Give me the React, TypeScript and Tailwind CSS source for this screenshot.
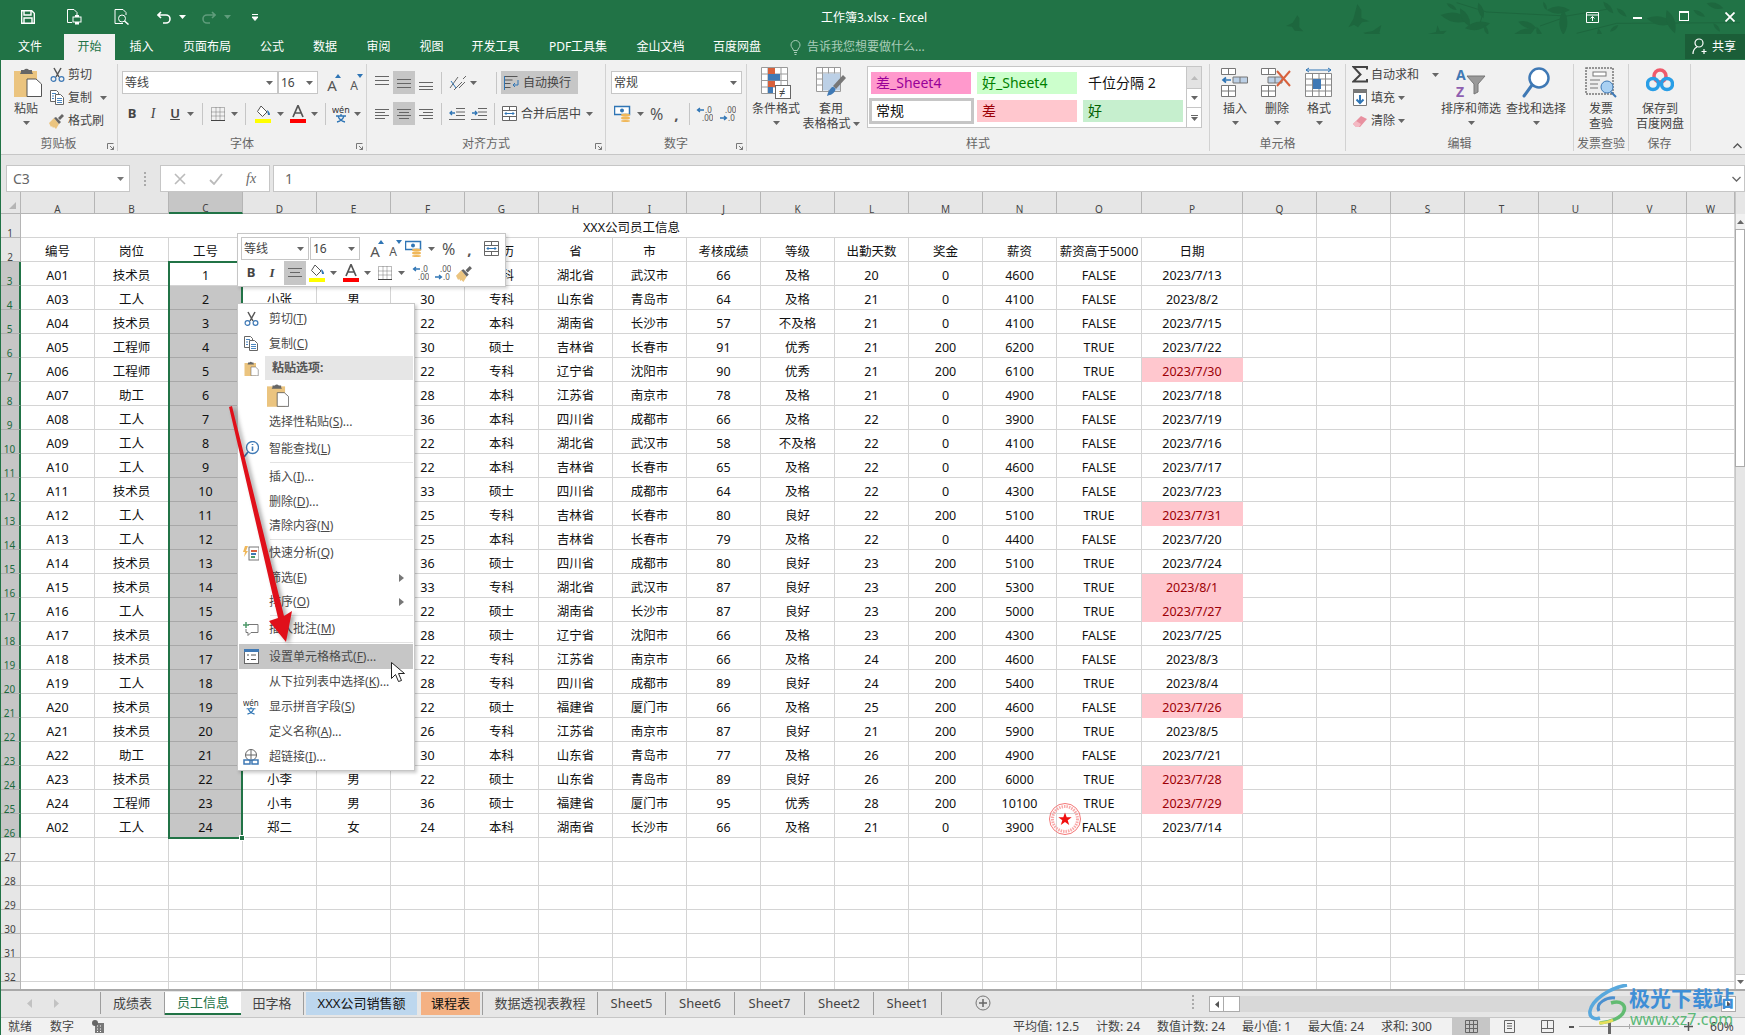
import React from "react";

const Caret = ({ c = "#666", cls = "" }: { c?: string; cls?: string }) => (
  <svg width="7" height="4" viewBox="0 0 7 4" className={"shrink-0 " + cls}><path d="M0 0h7L3.5 4z" fill={c} /></svg>
);
const Launcher = () => (
  <svg width="7" height="7" viewBox="0 0 7 7" className="absolute right-[3px] bottom-[1px]"><path d="M0.5 6V0.5H6.5M3 3l3.5 3.5M6.5 3.5v3h-3" fill="none" stroke="#777" strokeWidth="1" /></svg>
);

const Clipboard = ({ w = 28, h = 30 }: { w?: number; h?: number }) => (
  <svg width={w} height={h} viewBox="0 0 28 30" className="shrink-0">
    <rect x="0" y="4" width="23" height="26" fill="#ebc47f" />
    <path d="M7 5V3h3a3 3 0 0 1 5 0h3v2l1 2H6z" fill="#666" />
    <path d="M13 12h9l5.500 5v12.500H13z" fill="#fff" stroke="#555" strokeWidth="1" />
  </svg>
);
const Scissors = ({ s = 15 }: { s?: number }) => (
  <svg width={s} height={s} viewBox="0 0 15 15" className="shrink-0">
    <path d="M4 1l5 9M11 1L6 10" stroke="#555" strokeWidth="1.500" fill="none" />
    <circle cx="3.500" cy="12" r="2.400" fill="none" stroke="#3f79b5" strokeWidth="1.200" />
    <circle cx="11.500" cy="12" r="2.400" fill="none" stroke="#3f79b5" strokeWidth="1.200" />
  </svg>
);
const Copy = ({ s = 15 }: { s?: number }) => (
  <svg width={s} height={s} viewBox="0 0 15 15" className="shrink-0">
    <path d="M.5.500h6l2 2v9h-8z" fill="#fff" stroke="#666" />
    <path d="M5.500 4.500h5l3 3v7h-8z" fill="#fff" stroke="#666" />
    <path d="M2 3.500h4M2 6h2M2 8.500h2M7 8.500h5M7 10.500h5M7 12.500h5" stroke="#4a86c0" />
  </svg>
);
const Brush = ({ s = 16 }: { s?: number }) => (
  <svg width={s} height={s} viewBox="0 0 16 16" className="shrink-0">
    <path d="M0 10l5-5 5 6-3 5-2-2-1 1-1-2-1 1z" fill="#ebc47f" />
    <path d="M5 5l5 6 2-2-5-5zM9 5l4-4 2 2-4 4z" fill="#666" />
  </svg>
);
const Lines = ({ ys, x = [[0, 14]], c = "#666" }: { ys: number[]; x?: number[][]; c?: string }) => (
  <svg width="14" height="14" viewBox="0 0 14 14" className="shrink-0">
    {ys.map((y, i) => { const r = x[i % x.length]; return <path key={i} d={`M${r[0]} ${y + 0.5}H${r[1]}`} stroke={c} />; })}
  </svg>
);
const Currency = () => (
  <svg width="17" height="17" viewBox="0 0 17 17" className="shrink-0">
    <rect x="0.500" y="1.500" width="15" height="8" fill="#fff" stroke="#2f75b5" strokeWidth="1.500" />
    <circle cx="8" cy="5.500" r="2" fill="#2f75b5" />
    <ellipse cx="11.500" cy="10" rx="4.500" ry="1.500" fill="#f0b85a" />
    <ellipse cx="11.500" cy="13" rx="4.500" ry="1.500" fill="#f0b85a" />
    <ellipse cx="11.500" cy="16" rx="4.500" ry="1" fill="#f0b85a" />
  </svg>
);
const Dec = ({ inc }: { inc?: boolean }) => (
  <svg width="17" height="16" viewBox="0 0 17 16" className="shrink-0">
    <path d={inc ? "M1 12h6M5 10l2.500 2L5 14" : "M8 4H2M4 2L1.500 4 4 6"} stroke="#2f75b5" strokeWidth="1.300" fill="none" />
    <text x={inc ? 6 : 9} y="7" fontSize="8" fill="#555">{inc ? ".00" : ".0"}</text>
    <text x={inc ? 9 : 6} y="15" fontSize="8" fill="#555">{inc ? ".0" : ".00"}</text>
  </svg>
);
const BorderIc = () => (
  <svg width="14" height="14" viewBox="0 0 14 14" className="shrink-0">
    <path d="M.5.500h13v13H.5zM.5 5h13M.5 9h13M5 .5v13M9 .5v13" fill="none" stroke="#777" strokeDasharray="1 1" />
    <path d="M0 13.500h14" stroke="#444" />
  </svg>
);
const FillIc = () => (
  <svg width="17" height="18" viewBox="0 0 17 18" className="shrink-0">
    <path d="M6 1l6 6-4.500 4.500-5-5z" fill="#fff" stroke="#555" />
    <path d="M12 5c2 1 3 3 3 5h-2z" fill="#2f75b5" />
    <rect x="0" y="14" width="16" height="4" fill="#ffff00" />
  </svg>
);
const ColorA = () => (
  <svg width="16" height="18" viewBox="0 0 16 18" className="shrink-0">
    <path d="M3 12L8 0.500 13 12M5 8h6" fill="none" stroke="#555" strokeWidth="1.700" />
    <rect x="0" y="14" width="16" height="4" fill="#ff0000" />
  </svg>
);
const Wen = ({ s = 18 }: { s?: number }) => (
  <svg width={s} height={s} viewBox="0 0 18 18" className="shrink-0">
    <text x="0" y="8" fontSize="9" fill="#333">wén</text>
    <path d="M9 9v2M4 11h10M6 11c1 3 3 5 7 6M12 11c-1 3-3 5-7 6" stroke="#2f75b5" fill="none" strokeWidth="1.300" />
  </svg>
);
const MergeIc = ({ s = 15 }: { s?: number }) => (
  <svg width={s} height={s} viewBox="0 0 15 15" className="shrink-0">
    <path d="M.5.500h14v14H.5zM.5 4.500h14M.5 10.500h14M7.500.5v4M7.500 10.500v4" fill="#fff" stroke="#666" />
    <path d="M3 7.500h9M4.500 6L3 7.500 4.500 9M10.500 6L12 7.500 10.500 9" fill="none" stroke="#2f75b5" />
  </svg>
);
const GrowA = ({ up }: { up?: boolean }) => (
  <span className="relative flex items-end justify-center w-[18px] h-[20px] text-[#555]">
    <span className={up ? "text-[15px] leading-[16px]" : "text-[12px] leading-[14px]"}>A</span>
    <svg width="6" height="4" viewBox="0 0 6 4" className="absolute top-[1px] right-0"><path d={up ? "M0 4h6L3 0z" : "M0 0h6L3 4z"} fill="#2f75b5" /></svg>
  </span>
);
const Sep = ({ cls = "h-[22px]", ml = "mx-[4px]" }: { cls?: string; ml?: string }) => <span className={"w-px bg-[#c6c6c6] shrink-0 " + cls + " " + ml} />;

const Big = ({ icon, lines, caret, w = "w-[50px]" }: { icon: React.ReactNode; lines: React.ReactNode[]; caret?: boolean; w?: string }) => (
  <div className={"flex flex-col items-center shrink-0 text-[12px] leading-[15px] text-[#444] " + w}>
    <div className="h-[37px] pt-[3px] flex items-start justify-center">{icon}</div>
    {lines.map((l, i) => <div key={i} className="whitespace-nowrap flex items-center">{l}</div>)}
    {caret && <div className="h-[13px] flex items-center"><Caret /></div>}
  </div>
);
const Group = ({ w, label, children, launcher }: { w: string; label: string; children: React.ReactNode; launcher?: boolean }) => (
  <div className={"relative flex flex-col h-[87px] mt-[4px] border-r border-[#d2d2d2] shrink-0 " + w}>
    <div className="flex h-[72px]">{children}</div>
    <div className="h-[15px] flex items-center justify-center text-[12px] leading-[15px] text-[#666]">{label}</div>
    {launcher && <Launcher />}
  </div>
);
const Box = ({ w, text }: { w: string; text: string }) => (
  <div className={"h-[23px] bg-white border border-[#c6c6c6] flex items-center justify-between pl-[2px] pr-[4px] text-[12px] text-[#444] shrink-0 " + w}>
    <span>{text}</span><Caret />
  </div>
);

const SmallRow = ({ icon, text, caret, capMl = "ml-[8px]" }: { icon: React.ReactNode; text: string; caret?: boolean; capMl?: string }) => (
  <div className="h-[23px] flex items-center text-[12px] text-[#444] whitespace-nowrap">
    <span className="w-[18px] flex justify-center mr-[2px]">{icon}</span><span>{text}</span>{caret && <Caret cls={capMl} />}
  </div>
);

function CondFormatIc() {
  return (
    <svg width="30" height="32" viewBox="0 0 30 32">
      <path d="M.5.500h26v26H.5zM7 .5v26M20 .5v26M.5 7h26M.5 13.500h26M.5 20h26" fill="#fff" stroke="#9a9a9a" />
      <rect x="7" y="1" width="7" height="6" fill="#d8613c" /><rect x="7" y="7" width="12" height="6.500" fill="#3f79b5" /><rect x="7" y="14" width="7" height="6" fill="#d8613c" /><rect x="7" y="20" width="5" height="6" fill="#3f79b5" />
      <rect x="14.500" y="18.500" width="15" height="13" fill="#fff" stroke="#666" />
      <text x="18" y="29" fontSize="11" fill="#444">≠</text>
    </svg>
  );
}
function TableFormatIc() {
  return (
    <svg width="30" height="32" viewBox="0 0 30 32">
      <path d="M.5.500h24v24H.5zM.5 6h24M.5 12h24M.5 18h24M6.500.5v24M12.500.5v24M18.500.5v24" fill="#fff" stroke="#9a9a9a" />
      <rect x="7" y="6.500" width="17" height="17" fill="#bcd0e6" />
      <path d="M27 8l3 3-10 11-3-3z" fill="#777" />
      <path d="M16 20c3 0 4 2 3 4-2 4-6 4-8 5 1-3 1-5 5-9z" fill="#3f79b5" />
    </svg>
  );
}
const InsertIc = () => (
  <svg width="28" height="30" viewBox="0 0 28 30">
    <path d="M.5 1.500h14v6H.5zM7.500 1.500v6M.5 18.500h14v11H.5zM.5 24h14M7.500 18.500v11" fill="#fff" stroke="#777" />
    <path d="M10 13H2M5 10.500L2 13l3 2.500" fill="none" stroke="#2f75b5" strokeWidth="1.700" />
    <path d="M12 10h14.500v6H12zM19 10v6" fill="#bcd0e6" stroke="#777" />
  </svg>
);
const DeleteIc = () => (
  <svg width="32" height="30" viewBox="0 0 32 30">
    <path d="M.5 1.500h14v6H.5zM7.500 1.500v6M.5 18.500h14v11H.5zM.5 24h14M7.500 18.500v11" fill="#fff" stroke="#777" />
    <path d="M7 10h14v6H7zM14 10v6" fill="#bcd0e6" stroke="#777" />
    <path d="M16 4l13 15M29 4L16 19" stroke="#d8613c" strokeWidth="2" />
  </svg>
);
const FormatIc = () => (
  <svg width="28" height="32" viewBox="0 0 28 32">
    <path d="M1 3h25M1 3l3-2M1 3l3 2M26 3l-3-2M26 3l-3 2" stroke="#2f75b5" fill="none" />
    <path d="M.5 6.500h26v23H.5zM.5 12h26M.5 18h26M.5 24h26M7.500 6.500v23M14 6.500v23M20.500 6.500v23" fill="#fff" stroke="#888" />
    <rect x="8" y="12" width="8" height="10" fill="#3f79b5" />
  </svg>
);
const Sigma = () => (<svg width="16" height="17" viewBox="0 0 16 17"><path d="M15 3.500V1H1.500l7 7.500-7 7H15V13" fill="none" stroke="#444" strokeWidth="2" /></svg>);
const FillDown = () => (
  <svg width="14" height="17" viewBox="0 0 14 17"><path d="M.5.500h13v16H.5z" fill="#fff" stroke="#777" /><rect x="0" y="0" width="14" height="4" fill="#777" /><path d="M7 6v8M3.500 10.500L7 14l3.500-3.500" fill="none" stroke="#2f75b5" strokeWidth="2" /></svg>
);
const Eraser = () => (
  <svg width="14" height="14" viewBox="0 0 14 14"><path d="M0 10l8-8 6 3-7 8H3z" fill="#e8909f" /><path d="M0 10l3-3 5 3-2 3H3z" fill="#f4b9c3" /></svg>
);
const SortFilter = () => (
  <svg width="30" height="32" viewBox="0 0 30 32">
    <text x="0" y="13" fontSize="14" fontWeight="700" fill="#3f79b5">A</text>
    <text x="0" y="30" fontSize="14" fontWeight="700" fill="#8e5fb0">Z</text>
    <path d="M11 9h18l-7 8v8l-4 2V17z" fill="#999" stroke="#777" />
  </svg>
);
const Find = () => (
  <svg width="28" height="32" viewBox="0 0 28 32"><circle cx="17" cy="11" r="9.500" fill="#fff" stroke="#3f79b5" strokeWidth="2.500" /><path d="M10 18L2 29" stroke="#3f79b5" strokeWidth="3" strokeLinecap="round" /></svg>
);
const Invoice = () => (
  <svg width="32" height="32" viewBox="0 0 32 32">
    <path d="M1 1h27v26H1z" fill="#eee" stroke="#777" strokeWidth="1.500" strokeDasharray="2 1" />
    <rect x="8" y="5" width="13" height="4" fill="#fff" stroke="#777" />
    <path d="M5 13h10M5 17h8M5 21h8" stroke="#777" />
    <circle cx="22" cy="20" r="6" fill="#a9d0f2" stroke="#3f79b5" />
    <path d="M26 25l5 5" stroke="#3f79b5" strokeWidth="2" />
  </svg>
);
const Baidu = () => (
  <svg width="28" height="26" viewBox="0 0 28 26">
    <circle cx="14" cy="9" r="6" fill="none" stroke="#ef5a6b" strokeWidth="3.500" />
    <circle cx="7" cy="17" r="5.500" fill="none" stroke="#2a9ee6" strokeWidth="3.500" />
    <circle cx="21" cy="17" r="5.500" fill="none" stroke="#2a9ee6" strokeWidth="3.500" />
  </svg>
);

function leaf(x1: number, y1: number, x2: number, y2: number, w = 0.32) {
  const mx = (x1 + x2) / 2, my = (y1 + y2) / 2, dx = y2 - y1, dy = x1 - x2;
  return `M${x1} ${y1}Q${mx + dx * w} ${my + dy * w} ${x2} ${y2}Q${mx - dx * w} ${my - dy * w} ${x1} ${y1}z`;
}
const LEAVES = [[482, 45, 570, 60], [540, 25, 570, 80], [595, 8, 610, 55], [555, 85, 630, 70], [612, 75, 625, 105], [685, 125, 765, 85], [715, 65, 770, 85], [770, 80, 785, 120], [800, 30, 870, 30], [850, 30, 850, 105], [820, 140, 885, 115], [955, 85, 965, 135], [990, 95, 1015, 75], [1100, 55, 1180, 70], [1160, 30, 1185, 100], [1280, 10, 1330, 25], [1300, 70, 1320, 95], [790, 5, 800, 30], [500, 10, 530, 30], [970, 5, 1000, 40], [1240, 30, 1275, 50], [1010, 25, 1040, 50]];
const Foliage = () => (
  <svg width="465" height="60" viewBox="0 0 1395 180" className="absolute right-0 top-0" fill="#1d673e">
    <path d="M530 8l90 28 240 12 120-20M780 78l80-28M890 100l120-30 370-2M610 36L600 70" stroke="#1d673e" strokeWidth="3" fill="none" />
    {LEAVES.map((l, i) => <path key={i} d={leaf(l[0], l[1], l[2], l[3])} />)}
    <path d="M18 78l20-10 14-22 6 8 0 28 12 12-26-2-8-12z" />
    <path d="M205 82l15-25 12-45 12 18 0 24 24 10-22 3-12 15-12-8z" />
    <path d="M250 98l28-5 26-18-6 24 12 12-22 0-8 26-18-10-2-22z" />
    <path d="M444 102l24-6 4-20 8 18 20-2-14 14-4 32-14-14-4-20z" />
  </svg>
);

const COLS = ["A", "B", "C", "D", "E", "F", "G", "H", "I", "J", "K", "L", "M", "N", "O", "P", "Q", "R", "S", "T", "U", "V", "W"];
const HEAD = ["编号", "岗位", "工号", "", "", "", "学历", "省", "市", "考核成绩", "等级", "出勤天数", "奖金", "薪资", "薪资高于5000", "日期"];
const RAW = `A01 技术员 1 - - - 专科 湖北省 武汉市 66 及格 20 0 4600 FALSE 2023/7/13
A03 工人 2 小张 男 30 专科 山东省 青岛市 64 及格 21 0 4100 FALSE 2023/8/2
A04 技术员 3 - - 22 本科 湖南省 长沙市 57 不及格 21 0 4100 FALSE 2023/7/15
A05 工程师 4 - - 30 硕士 吉林省 长春市 91 优秀 21 200 6200 TRUE 2023/7/22
A06 工程师 5 - - 22 专科 辽宁省 沈阳市 90 优秀 21 200 6100 TRUE 2023/7/30
A07 助工 6 - - 28 本科 江苏省 南京市 78 及格 21 0 4900 FALSE 2023/7/18
A08 工人 7 - - 36 本科 四川省 成都市 66 及格 22 0 3900 FALSE 2023/7/19
A09 工人 8 - - 22 本科 湖北省 武汉市 58 不及格 22 0 4100 FALSE 2023/7/16
A10 工人 9 - - 22 本科 吉林省 长春市 65 及格 22 0 4600 FALSE 2023/7/17
A11 技术员 10 - - 33 硕士 四川省 成都市 64 及格 22 0 4300 FALSE 2023/7/23
A12 工人 11 - - 25 专科 吉林省 长春市 80 良好 22 200 5100 TRUE 2023/7/31
A13 工人 12 - - 25 本科 吉林省 长春市 79 及格 22 0 4400 FALSE 2023/7/20
A14 技术员 13 - - 36 硕士 四川省 成都市 80 良好 23 200 5100 TRUE 2023/7/24
A15 技术员 14 - - 33 专科 湖北省 武汉市 87 良好 23 200 5300 TRUE 2023/8/1
A16 工人 15 - - 22 硕士 湖南省 长沙市 87 良好 23 200 5000 TRUE 2023/7/27
A17 技术员 16 - - 28 硕士 辽宁省 沈阳市 66 及格 23 200 4300 FALSE 2023/7/25
A18 技术员 17 - - 22 专科 江苏省 南京市 66 及格 24 200 4600 FALSE 2023/8/3
A19 工人 18 - - 28 专科 四川省 成都市 89 良好 24 200 5400 TRUE 2023/8/4
A20 技术员 19 - - 22 硕士 福建省 厦门市 66 及格 25 200 4600 FALSE 2023/7/26
A21 技术员 20 - - 26 专科 江苏省 南京市 87 良好 21 200 5900 TRUE 2023/8/5
A22 助工 21 - - 30 本科 山东省 青岛市 77 及格 26 200 4900 FALSE 2023/7/21
A23 技术员 22 小李 男 22 硕士 山东省 青岛市 89 良好 26 200 6000 TRUE 2023/7/28
A24 工程师 23 小韦 男 36 硕士 福建省 厦门市 95 优秀 28 200 10100 TRUE 2023/7/29
A02 工人 24 郑二 女 24 本科 湖南省 长沙市 66 及格 21 0 3900 FALSE 2023/7/14`;
const DATA = RAW.split("\n").map((l) => l.split(" ").map((v) => (v === "-" ? "" : v)));
const PINK = new Set(["2023/7/30", "2023/7/31", "2023/8/1", "2023/7/27", "2023/7/26", "2023/7/28", "2023/7/29"]);
const cell = "border-r border-b border-[#d4d4d4] flex items-center justify-center pt-[4px] text-[12.5px] leading-[17px] text-[#111] whitespace-nowrap overflow-visible";

function Sheet() {
  const cells: React.ReactNode[] = [];
  cells.push(<div key="corner" className="bg-[#e6e6e6] border-r border-b border-[#b5b5b5] flex items-end justify-end pr-[4px] pb-[4px]"><svg width="7" height="7" viewBox="0 0 7 7"><path d="M7 0v7H0z" fill="#b5b5b5" /></svg></div>);
  COLS.forEach((c) => cells.push(
    <div key={"h" + c} className={"flex items-end justify-center text-[10px] leading-[8px] text-[#444] border-r border-[#b5b5b5] " + (c === "C" ? "bg-[#c6c6c6] border-b-2 border-b-[#217346]" : "bg-[#e6e6e6] border-b border-b-[#b5b5b5]")}>{c}</div>
  ));
  for (let r = 1; r <= 33; r++) {
    const sel = r >= 3 && r <= 26;
    cells.push(
      <div key={"r" + r} className={"flex items-end justify-center text-[10px] leading-[8px] border-b " + (sel ? "bg-[#c6c6c6] text-[#1d6a3f] border-b-[#aeaeae] border-r-2 border-r-[#217346]" : "bg-[#e6e6e6] text-[#444] border-b-[#b5b5b5] border-r border-r-[#b5b5b5]")}>{r}</div>
    );
    if (r === 1) {
      cells.push(<div key="title" className={cell + " col-span-16"}>XXX公司员工信息</div>);
      for (let c = 16; c < COLS.length; c++) cells.push(<div key={"t" + c} className={cell} />);
      continue;
    }
    for (let c = 0; c < COLS.length; c++) {
      let v = "";
      if (r === 2) v = HEAD[c] || "";
      else if (sel) v = DATA[r - 3][c] || "";
      const pink = c === 15 && PINK.has(v);
      const grey = c === 2 && r >= 4 && r <= 26;
      cells.push(
        <div key={r + "-" + c} className={cell + (pink ? " bg-[#ffc7ce] !text-[#9c0006] !border-[#ffc7ce]" : "") + (grey ? " bg-[#c6c6c6] !border-b-[#a8a8a8] !border-r-[#c6c6c6]" : "")}>{v}</div>
      );
    }
  }
  return (
    <div className="grid grid-cols-[21px_repeat(14,74px)_85px_101px_repeat(6,74px)_48px] grid-rows-[22px_repeat(33,24px)] w-[1735px] h-[797px] overflow-hidden bg-white shrink-0">
      {cells}
    </div>
  );
}

const Hot = ({ a, k, b = "" }: { a: string; k: string; b?: string }) => <span>{a}(<u>{k}</u>){b}</span>;

const MenuItem = ({ icon, children, arrow, active, h = "h-[25px]" }: { icon?: React.ReactNode; children: React.ReactNode; arrow?: boolean; active?: boolean; h?: string }) => (
  <div className={"flex items-center mx-px text-[12px] text-[#4a4a4a] whitespace-nowrap " + h + (active ? " bg-[#c6c6c6]" : "")}>
    <span className="w-[24px] mr-[6px] flex justify-center shrink-0">{icon}</span>
    <span className="flex-1">{children}</span>
    {arrow && <svg width="5" height="8" viewBox="0 0 5 8" className="mr-[9px]"><path d="M0 0l5 4-5 4z" fill="#777" /></svg>}
  </div>
);
const MSep = () => <div className="h-px bg-[#e2e2e2] ml-[32px] mr-px my-px" />;

function ContextMenu() {
  return (
    <div className="absolute left-[237px] top-[303px] w-[178px] h-[468px] bg-white border border-[#c6c6c6] shadow-[2px_2px_3px_rgba(0,0,0,0.2)] pt-[2px] z-20">
      <MenuItem icon={<Scissors />}><Hot a="剪切" k="T" /></MenuItem>
      <MenuItem icon={<Copy />}><Hot a="复制" k="C" /></MenuItem>
      <div className="flex items-center h-[24px]">
        <span className="w-[24px] mr-[2px] flex justify-center ml-px shrink-0"><Clipboard w={15} h={15} /></span>
        <span className="flex-1 h-full bg-[#e6e6e6] mr-px flex items-center pl-[7px] font-bold text-[12px] text-[#555]">粘贴选项:</span>
      </div>
      <div className="h-[30px] pl-[29px] flex items-center"><Clipboard w={22} h={24} /></div>
      <MenuItem h="h-[24px]"><Hot a="选择性粘贴" k="S" b="..." /></MenuItem>
      <MSep />
      <MenuItem h="h-[24px]" icon={
        <svg width="16" height="17" viewBox="0 0 16 17"><circle cx="9.500" cy="6.500" r="6" fill="#fff" stroke="#3f79b5" strokeWidth="1.300" /><path d="M9.500 3v1M9.500 5.500V10" stroke="#3f79b5" strokeWidth="1.600" /><path d="M5 11l-4 5" stroke="#3f79b5" strokeWidth="1.800" /></svg>
      }><Hot a="智能查找" k="L" /></MenuItem>
      <MSep />
      <MenuItem><Hot a="插入" k="I" b="..." /></MenuItem>
      <MenuItem><Hot a="删除" k="D" b="..." /></MenuItem>
      <MenuItem h="h-[24px]"><Hot a="清除内容" k="N" /></MenuItem>
      <MSep />
      <MenuItem h="h-[24px]" icon={
        <svg width="16" height="15" viewBox="0 0 16 15"><path d="M2 0h3L3 5h2L1 11l1-5H0z" fill="#f0b85a" /><rect x="6" y="1" width="10" height="13" fill="#fff" stroke="#777" /><path d="M8 5h6" stroke="#d8613c" strokeWidth="2" /><path d="M8 8h5" stroke="#3f79b5" strokeWidth="2" /><path d="M8 11h4" stroke="#4e9a6b" strokeWidth="2" /></svg>
      }><Hot a="快速分析" k="Q" /></MenuItem>
      <MenuItem arrow><Hot a="筛选" k="E" /></MenuItem>
      <MenuItem h="h-[24px]" arrow><Hot a="排序" k="O" /></MenuItem>
      <MSep />
      <MenuItem h="h-[24px]" icon={
        <svg width="16" height="15" viewBox="0 0 16 15"><path d="M5 2.500h10v8H8l-3 3v-3H3V7" fill="#fff" stroke="#777" /><path d="M3 0v6M0 3h6" stroke="#4e9a6b" strokeWidth="1.500" /></svg>
      }><Hot a="插入批注" k="M" /></MenuItem>
      <MSep />
      <MenuItem active icon={
        <svg width="15" height="15" viewBox="0 0 15 15"><rect x=".5" y=".5" width="14" height="14" fill="#fff" stroke="#666" /><rect x="0" y="0" width="15" height="3" fill="#3f79b5" /><path d="M3 6h2M7 6h5M3 10.500h2M7 10.500h5" stroke="#555" /></svg>
      }><Hot a="设置单元格格式" k="F" b="..." /></MenuItem>
      <MenuItem><Hot a="从下拉列表中选择" k="K" b="..." /></MenuItem>
      <MenuItem icon={<Wen s={16} />}><Hot a="显示拼音字段" k="S" /></MenuItem>
      <MenuItem><Hot a="定义名称" k="A" b="..." /></MenuItem>
      <MenuItem icon={
        <svg width="16" height="16" viewBox="0 0 16 16"><circle cx="8" cy="6" r="5.500" fill="none" stroke="#666" /><path d="M2.500 6h11M8 .5v11" stroke="#666" /><path d="M1 11h6v4H1zM9 11h6v4H9z" fill="none" stroke="#3f79b5" strokeWidth="1.500" /></svg>
      }><Hot a="超链接" k="I" b="..." /></MenuItem>
    </div>
  );
}

function MiniToolbar() {
  return (
    <div className="absolute left-[237px] top-[233px] w-[269px] h-[54px] bg-white border border-[#c6c6c6] shadow-[2px_2px_3px_rgba(0,0,0,0.15)] z-20 pl-[3px] pt-[2px] flex flex-col">
      <div className="flex items-center h-[25px]">
        <Box w="w-[68px]" text="等线" /><span className="w-px" /><Box w="w-[50px]" text="16" />
        <span className="ml-[6px]"><GrowA up /></span><GrowA />
        <span className="ml-[3px]"><Currency /></span><Caret cls="ml-[6px]" />
        <span className="ml-[7px] text-[16px] leading-[16px] text-[#555]">%</span>
        <span className="ml-[12px] w-[8px] text-[15px] leading-[12px] font-bold text-[#555]">,</span>
        <span className="ml-[9px]"><MergeIc /></span>
      </div>
      <div className="flex items-center h-[24px]">
        <span className="w-[20px] text-center font-bold text-[13px] text-[#444]">B</span>
        <span className="w-[22px] text-center italic font-bold text-[13px] text-[#444] [font-family:'Liberation_Serif',serif]">I</span>
        <span className="ml-px w-[22px] h-[24px] bg-[#c6c6c6] flex items-center justify-center"><Lines ys={[2, 6, 10]} x={[[0, 14], [2, 12], [0, 14]]} /></span>
        <span className="ml-[3px]"><FillIc /></span><Caret cls="ml-[4px]" />
        <span className="ml-[6px]"><ColorA /></span><Caret cls="ml-[5px]" />
        <span className="ml-[7px]"><BorderIc /></span><Caret cls="ml-[6px]" />
        <span className="ml-[7px]"><Dec /></span>
        <span className="ml-[5px]"><Dec inc /></span>
        <span className="ml-[5px]"><Brush s={17} /></span>
      </div>
    </div>
  );
}

const TABS: [string, string][] = [["文件", "w-[64px] pr-[4px]"], ["开始", "w-[51px]"], ["插入", "w-[53px]"], ["页面布局", "w-[78px]"], ["公式", "w-[52px]"], ["数据", "w-[54px]"], ["审阅", "w-[53px]"], ["视图", "w-[53px]"], ["开发工具", "w-[75px]"], ["PDF工具集", "w-[90px]"], ["金山文档", "w-[75px]"], ["百度网盘", "w-[78px]"]];
const SHEETS: [string, string, string][] = [
  ["成绩表", "w-[64px]", "border-r border-[#9d9d9d] text-[#444]"],
  ["员工信息", "w-[76px]", "bg-white text-[#217346] border-b-[2px] border-[#217346]"],
  ["田字格", "w-[63px]", "border-r border-[#9d9d9d] text-[#444]"],
  ["XXX公司销售额", "w-[111px] mx-[2px]", "bg-[#bdd7ee] text-[#111]"],
  ["课程表", "w-[59px] mx-[2px]", "bg-[#f4b183] text-[#111]"],
  ["数据透视表教程", "w-[116px]", "border-x border-[#9d9d9d] text-[#444]"],
  ["Sheet5", "w-[68px]", "border-r border-[#9d9d9d] text-[#444]"],
  ["Sheet6", "w-[69px]", "border-r border-[#9d9d9d] text-[#444]"],
  ["Sheet7", "w-[70px]", "border-r border-[#9d9d9d] text-[#444]"],
  ["Sheet2", "w-[69px]", "border-r border-[#9d9d9d] text-[#444]"],
  ["Sheet1", "w-[68px]", "border-r border-[#9d9d9d] text-[#444]"],
];

export default function App() {
  return (
    <div className="relative w-[1745px] h-[1035px] overflow-hidden flex flex-col bg-white [font-family:'Noto_Sans','Noto_Sans_CJK_SC',sans-serif]">
      {/* title bar */}
      <div className="relative h-[34px] bg-[#217346] flex items-center shrink-0">
        <Foliage />
        <div className="flex items-center pl-[21px] relative">
          <svg width="14" height="14" viewBox="0 0 14 14"><path d="M.7.700h10l2.600 2.600v10H.7z" fill="none" stroke="#fff" strokeWidth="1.400" /><path d="M3 1v4h7V1M3 13V8h8v5" fill="none" stroke="#fff" strokeWidth="1.400" /></svg>
          <svg width="16" height="16" viewBox="0 0 16 16" className="ml-[31px]"><path d="M8 .5H1.500v13H6M8 .5l3 3V6" fill="none" stroke="#fff" /><rect x="7" y="8" width="8" height="5" fill="none" stroke="#fff" /><path d="M9 6h4v2H9zM9 13h4v2.500H9z" fill="#fff" /></svg>
          <svg width="15" height="16" viewBox="0 0 15 16" className="ml-[32px]"><path d="M9 .5H1v14h8M9 .5l3 3V6" fill="none" stroke="#fff" /><circle cx="8" cy="9.500" r="3.500" fill="none" stroke="#fff" /><path d="M10.500 12l4 3.500" stroke="#fff" strokeWidth="1.500" /></svg>
          <svg width="14" height="13" viewBox="0 0 14 13" className="ml-[28px]"><path d="M4 1L1 4l3 3M1 4h8a4 4 0 0 1 0 8H6" fill="none" stroke="#fff" strokeWidth="1.600" /></svg>
          <Caret c="#fff" cls="ml-[8px]" />
          <svg width="14" height="13" viewBox="0 0 14 13" className="ml-[16px]"><path d="M10 1l3 3-3 3M13 4H5a4 4 0 0 0 0 8h3" fill="none" stroke="#5f9c7b" strokeWidth="1.600" /></svg>
          <Caret c="#5f9c7b" cls="ml-[8px]" />
          <svg width="6" height="7" viewBox="0 0 6 7" className="ml-[21px]"><path d="M0 .5h6M0 3h6L3 6.500z" stroke="#fff" strokeWidth="1" fill="#fff" /></svg>
        </div>
        <div className="absolute left-[821px] top-[10px] text-[12px] leading-[16px] text-white whitespace-nowrap">工作簿3.xlsx - Excel</div>
        <svg width="13" height="11" viewBox="0 0 13 11" className="absolute left-[1586px] top-[12px]"><path d="M.5.500h12v10H.5zM.5 3h12M6.500 9V4.500M4.500 6.500l2-2 2 2" fill="none" stroke="#fff" /></svg>
        <span className="absolute left-[1633px] top-[17px] w-[9px] h-[2px] bg-white" />
        <span className="absolute left-[1679px] top-[11px] w-[10px] h-[10px] border border-white border-t-[2px]" />
        <svg width="10" height="10" viewBox="0 0 10 10" className="absolute left-[1725px] top-[12px]"><path d="M.5.500l9 9M9.500.5l-9 9" stroke="#fff" strokeWidth="1.800" /></svg>
      </div>
      {/* tabs */}
      <div className="relative h-[26px] bg-[#217346] flex shrink-0 text-[12px] text-white">
        {TABS.map(([t, w]) => (
          <div key={t} className={"flex items-center justify-center h-full " + w + (t === "开始" ? " bg-[#f1f1f1] text-[#217346]" : "")}>{t}</div>
        ))}
        <svg width="11" height="15" viewBox="0 0 11 15" className="ml-[14px] mt-[6px]"><path d="M3.500 10.500C3 8 1 7.500 1 5a4.500 4.500 0 0 1 9 0c0 2.500-2 3-2.500 5.500zM4 12.500h3M4.500 14.500h2" fill="none" stroke="#a9cdb9" /></svg>
        <div className="ml-[6px] flex items-center text-[#a9cdb9]">告诉我您想要做什么...</div>
        <div className="absolute left-[1685px] top-0 w-[60px] h-[25px] bg-[#1b5e38] flex items-center pl-[7px]">
          <svg width="16" height="17" viewBox="0 0 16 17" className="mr-[4px]"><circle cx="7" cy="5" r="4" fill="none" stroke="#fff" strokeWidth="1.200" /><path d="M1 16c0-4 2-6 4-7M12 11v5M9.500 13.500h5" fill="none" stroke="#fff" strokeWidth="1.200" /></svg>
          共享
        </div>
      </div>
      {/* ribbon */}
      <div className="relative h-[95px] bg-[#f1f1f1] border-b border-[#c6c6c6] flex shrink-0">
        <Group w="w-[118px]" label="剪贴板" launcher>
          <div className="ml-[11px] w-[32px]"><Big w="w-[30px]" icon={<span className="ml-[4px]"><Clipboard /></span>} lines={["粘贴"]} caret /></div>
          <div className="ml-[5px] -mt-[1px]">
            <SmallRow icon={<Scissors />} text="剪切" />
            <SmallRow icon={<Copy />} text="复制" caret />
            <SmallRow icon={<Brush />} text="格式刷" />
          </div>
        </Group>
        <Group w="w-[249px]" label="字体" launcher>
          <div className="pl-[4px] pt-[7px] flex flex-col gap-[8px]">
            <div className="flex items-center">
              <Box w="w-[156px]" text="等线" /><Box w="w-[40px]" text="16" />
              <span className="ml-[5px]"><GrowA up /></span><span className="ml-[4px]"><GrowA /></span>
            </div>
            <div className="flex items-center h-[23px] text-[#444]">
              <span className="w-[20px] text-center font-bold text-[13px]">B</span>
              <span className="w-[22px] text-center italic text-[14px] [font-family:'Liberation_Serif',serif]">I</span>
              <span className="w-[22px] text-center underline text-[13px] font-semibold">U</span>
              <Caret cls="ml-[1px]" /><Sep ml="ml-[8px] mr-[8px]" /><BorderIc /><Caret cls="ml-[6px]" /><Sep ml="ml-[7px] mr-[9px]" /><FillIc /><Caret cls="ml-[5px]" />
              <span className="ml-[6px]"><ColorA /></span><Caret cls="ml-[5px]" /><Sep ml="ml-[7px] mr-[6px]" /><Wen /><Caret cls="ml-[4px]" />
            </div>
          </div>
        </Group>
        <Group w="w-[239px]" label="对齐方式" launcher>
          <div className="pl-[8px] pt-[7px] flex flex-col gap-[8px]">
            <div className="flex items-center h-[23px]">
              <Lines ys={[0, 4, 8]} /><span className="ml-[4px] w-[22px] h-[23px] bg-[#c6c6c6] flex items-center justify-center"><Lines ys={[3, 7, 11]} /></span>
              <span className="ml-[4px]"><Lines ys={[6, 10, 13]} /></span><Sep ml="ml-[8px] mr-[7px]" />
              <svg width="18" height="16" viewBox="0 0 18 16"><path d="M1 13L9 2M5 15l8-8M10 13l6-6M14 4l3-3" stroke="#666" fill="none" /><path d="M2 6l5 7" stroke="#2f75b5" /></svg>
              <Caret cls="ml-[3px]" /><Sep ml="ml-[19px] mr-[4px]" />
              <div className="h-[23px] w-[77px] bg-[#c6c6c6] flex items-center pl-[3px] text-[12px] text-[#444] whitespace-nowrap">
                <svg width="15" height="16" viewBox="0 0 15 16" className="mr-[4px]"><path d="M.5 1.500h13M.5 5h8M.5 8.500h6M.5 12.500h6" stroke="#555" fill="none" /><path d="M.5 1v14M14 5v5H9M11 8l-2 2 2 2" stroke="#2f75b5" fill="none" /></svg>
                自动换行
              </div>
            </div>
            <div className="flex items-center h-[23px]">
              <Lines ys={[2, 5, 8, 11]} x={[[0, 14], [0, 10], [0, 14], [0, 10]]} />
              <span className="ml-[4px] w-[22px] h-[23px] bg-[#c6c6c6] flex items-center justify-center"><Lines ys={[2, 5, 8, 11]} x={[[0, 14], [2, 12]]} /></span>
              <span className="ml-[4px]"><Lines ys={[2, 5, 8, 11]} x={[[0, 14], [4, 14]]} /></span><Sep ml="ml-[8px] mr-[7px]" />
              <svg width="16" height="14" viewBox="0 0 16 14"><path d="M7 1.500h9M7 5h9M7 8.500h9M0 12.500h16M0 1h0" stroke="#666" /><path d="M6 6H1M3 4L1 6l2 2" fill="none" stroke="#2f75b5" strokeWidth="1.300" /></svg>
              <span className="w-[6px]" />
              <svg width="16" height="14" viewBox="0 0 16 14"><path d="M7 1.500h9M7 5h9M7 8.500h9M0 12.500h16" stroke="#666" /><path d="M1 6h5M4 4l2 2-2 2" fill="none" stroke="#2f75b5" strokeWidth="1.300" /></svg>
              <Sep ml="ml-[7px] mr-[7px]" /><MergeIc />
              <span className="ml-[4px] text-[12px] text-[#444] whitespace-nowrap">合并后居中</span><Caret cls="ml-[5px]" />
            </div>
          </div>
        </Group>
        <Group w="w-[141px]" label="数字" launcher>
          <div className="pl-[5px] pt-[7px] flex flex-col gap-[8px]">
            <Box w="w-[131px]" text="常规" />
            <div className="flex items-center h-[23px] pl-[3px]">
              <Currency /><Caret cls="ml-[6px]" />
              <span className="ml-[6px] text-[16px] leading-[16px] text-[#555]">%</span>
              <span className="ml-[11px] w-[8px] text-[15px] leading-[12px] font-bold text-[#555]">,</span>
              <Sep ml="ml-[7px] mr-[6px]" /><Dec /><span className="w-[6px]" /><Dec inc />
            </div>
          </div>
        </Group>
        <Group w="w-[463px]" label="样式">
          <div className="flex pl-[1px]">
            <Big w="w-[56px]" icon={<CondFormatIc />} lines={["条件格式"]} caret />
            <Big w="w-[54px]" icon={<TableFormatIc />} lines={["套用", <>表格格式<Caret cls="ml-[2px]" /></>]} />
          </div>
          <div className="ml-[9px] mt-[2px] flex h-[62px]">
            <div className="w-[320px] bg-white border border-[#c6c6c6] grid grid-cols-[100px_100px_100px] grid-rows-[22px_22px] gap-[6px] pl-[3px] pt-[5px] text-[14px] leading-[20px] overflow-hidden">
              <div className="bg-[#ff99cc] text-[#990099] flex items-center pl-[5px]">差_Sheet4</div>
              <div className="bg-[#ccffcc] text-[#008000] flex items-center pl-[5px]">好_Sheet4</div>
              <div className="flex items-center pl-[5px] text-[#111]">千位分隔 2</div>
              <div className="-m-[2px] -mr-[3px] border-[3px] border-[#c6c6c6] flex items-center pl-[4px] text-[#111]">常规</div>
              <div className="bg-[#ffc7ce] text-[#9c0006] flex items-center pl-[5px]">差</div>
              <div className="bg-[#c6efce] text-[#006100] flex items-center pl-[5px]">好</div>
            </div>
            <div className="w-[15px] flex flex-col border-y border-r border-[#c6c6c6]">
              <div className="h-[22px] bg-[#e3e3e3] flex items-center justify-center border-b border-[#c6c6c6]"><Caret c="#bbb" cls="rotate-180" /></div>
              <div className="h-[19px] bg-white flex items-center justify-center border-b border-[#c6c6c6]"><Caret /></div>
              <div className="flex-1 bg-white flex flex-col items-center justify-center gap-[1px]"><span className="w-[7px] h-px bg-[#666]" /><Caret /></div>
            </div>
          </div>
        </Group>
        <Group w="w-[136px]" label="单元格">
          <div className="flex pl-[4px]">
            <Big w="w-[42px]" icon={<InsertIc />} lines={["插入"]} caret />
            <Big w="w-[42px]" icon={<DeleteIc />} lines={["删除"]} caret />
            <Big w="w-[42px]" icon={<FormatIc />} lines={["格式"]} caret />
          </div>
        </Group>
        <Group w="w-[228px]" label="编辑">
          <div className="pl-[5px] -mt-[1px] w-[96px] shrink-0">
            <SmallRow icon={<Sigma />} text="自动求和" caret capMl="ml-[13px]" />
            <SmallRow icon={<FillDown />} text="填充" caret capMl="ml-[3px]" />
            <SmallRow icon={<Eraser />} text="清除" caret capMl="ml-[3px]" />
          </div>
          <Big w="w-[60px] ml-[-1px]" icon={<SortFilter />} lines={["排序和筛选"]} caret />
          <Big w="w-[66px] ml-[2px]" icon={<Find />} lines={["查找和选择"]} caret />
        </Group>
        <Group w="w-[55px]" label="发票查验">
          <Big w="w-[54px]" icon={<Invoice />} lines={["发票", "查验"]} />
        </Group>
        <Group w="w-[62px]" label="保存">
          <Big w="w-[62px]" icon={<Baidu />} lines={["保存到", "百度网盘"]} />
        </Group>
        <svg width="9" height="6" viewBox="0 0 9 6" className="absolute right-[3px] bottom-[5px]"><path d="M.5 5l4-4 4 4" fill="none" stroke="#555" strokeWidth="1.300" /></svg>
      </div>
      {/* formula bar */}
      <div className="h-[37px] bg-[#e6e6e6] flex pt-[10px] shrink-0 pl-[6px]">
        <div className="w-[124px] bg-white border border-[#c6c6c6] flex items-center justify-between pl-[6px] pr-[5px] text-[14px] text-[#666] shrink-0"><span>C3</span><Caret c="#777" /></div>
        <div className="w-[30px] flex flex-col items-center justify-center gap-[2px] shrink-0">
          <span className="w-[2px] h-[2px] bg-[#aaa]" /><span className="w-[2px] h-[2px] bg-[#aaa]" /><span className="w-[2px] h-[2px] bg-[#aaa]" /><span className="w-[2px] h-[2px] bg-[#aaa]" />
        </div>
        <div className="w-[110px] bg-white border border-[#c6c6c6] flex items-center shrink-0">
          <svg width="12" height="12" viewBox="0 0 12 12" className="ml-[13px]"><path d="M1 1l10 10M11 1L1 11" stroke="#bbb" strokeWidth="1.600" /></svg>
          <svg width="14" height="12" viewBox="0 0 14 12" className="ml-[23px]"><path d="M1 7l4 4 8-10" fill="none" stroke="#bbb" strokeWidth="1.800" /></svg>
          <span className="ml-[23px] italic text-[14px] text-[#666] [font-family:'Liberation_Serif',serif]">fx</span>
        </div>
        <div className="ml-[3px] flex-1 bg-white border border-[#c6c6c6] flex items-center pl-[11px] text-[14px] text-[#666]">
          <span className="flex-1">1</span>
          <svg width="9" height="6" viewBox="0 0 9 6" className="mr-[3px]"><path d="M.5 1l4 4 4-4" fill="none" stroke="#666" strokeWidth="1.300" /></svg>
        </div>
      </div>
      {/* sheet */}
      <div className="h-[797px] flex shrink-0 overflow-hidden">
        <Sheet />
        <div className="w-[10px] bg-[#e6e6e6] border-l border-[#c6c6c6] flex flex-col shrink-0">
          <div className="h-[22px] shrink-0" />
          <div className="h-[15px] flex items-center justify-center bg-[#f1f1f1]"><Caret cls="rotate-180" /></div>
          <div className="h-[238px] bg-white border border-[#ababab] -ml-px" />
          <div className="flex-1" />
          <div className="h-[15px] flex items-center justify-center bg-white border-t border-[#c6c6c6]"><Caret /></div>
        </div>
      </div>
      {/* sheet tabs */}
      <div className="h-[28px] bg-[#e6e6e6] border-t-2 border-[#a9a9a9] flex shrink-0 relative">
        <div className="w-[101px] shrink-0 flex items-center pl-[27px] gap-[22px] border-r border-[#9d9d9d] h-[22px] mt-[1px]">
          <svg width="5" height="9" viewBox="0 0 5 9"><path d="M5 0L0 4.500 5 9z" fill="#c2c2c2" /></svg>
          <svg width="5" height="9" viewBox="0 0 5 9"><path d="M0 0l5 4.500L0 9z" fill="#c2c2c2" /></svg>
        </div>
        {SHEETS.map(([t, w, c]) => (
          <div key={t} className={"flex items-center justify-center h-[23px] mt-[1px] shrink-0 text-[13px] whitespace-nowrap " + w + " " + c}>{t}</div>
        ))}
        <svg width="16" height="16" viewBox="0 0 16 16" className="ml-[33px] mt-[4px] shrink-0"><circle cx="8" cy="8" r="7" fill="none" stroke="#777" /><path d="M8 4v8M4 8h8" stroke="#666" strokeWidth="1.500" /></svg>
        <div className="ml-[201px] mt-[4px] h-[14px] w-[2px] flex flex-col justify-between items-center shrink-0"><span className="w-[2px] h-[2px] bg-[#aaa]" /><span className="w-[2px] h-[2px] bg-[#aaa]" /><span className="w-[2px] h-[2px] bg-[#aaa]" /><span className="w-[2px] h-[2px] bg-[#aaa]" /></div>
        <div className="ml-[15px] mt-[5px] h-[16px] w-[527px] bg-[#d8d8d8] flex shrink-0">
          <div className="w-[15px] bg-white border border-[#ababab] flex items-center justify-center"><svg width="4" height="7" viewBox="0 0 4 7"><path d="M4 0L0 3.500 4 7z" fill="#555" /></svg></div>
          <div className="w-[16px] bg-white border-y border-r border-[#ababab]" />
          <div className="flex-1" />
          <div className="w-[15px] bg-white border border-[#ababab] flex items-center justify-center"><svg width="4" height="7" viewBox="0 0 4 7"><path d="M0 0l4 3.500L0 7z" fill="#555" /></svg></div>
        </div>
      </div>
      {/* status bar */}
      <div className="h-[18px] bg-[#f1f1f1] border-t border-[#c6c6c6] flex items-center shrink-0 text-[12px] text-[#444] whitespace-nowrap relative">
        <span className="ml-[8px]">就绪</span><span className="ml-[18px]">数字</span>
        <svg width="12" height="13" viewBox="0 0 12 13" className="ml-[18px]"><rect x="3" y="3" width="9" height="10" fill="#777" /><circle cx="3" cy="3" r="3" fill="#666" /><path d="M5 6h1M8 6h1M5 9h1M8 9h1M5 11.500h1M8 11.500h1" stroke="#fff" /></svg>
        <span className="ml-[909px] w-[83px]">平均值: 12.5</span>
        <span className="w-[61px]">计数: 24</span>
        <span className="w-[85px]">数值计数: 24</span>
        <span className="w-[66px]">最小值: 1</span>
        <span className="w-[73px]">最大值: 24</span>
        <span className="w-[71px]">求和: 300</span>
        <span className="w-[38px] h-full bg-[#c6c6c6] flex items-center justify-center"><svg width="13" height="13" viewBox="0 0 13 13"><path d="M.5.500h12v12H.5zM.5 4.500h12M.5 8.500h12M4.500.5v12M8.500.5v12" fill="none" stroke="#666" /></svg></span>
        <span className="w-[38px] flex items-center justify-center"><svg width="11" height="13" viewBox="0 0 11 13"><path d="M.5.500h10v12H.5zM3 3.500h5M3 6h5M3 8.500h5" fill="none" stroke="#666" /></svg></span>
        <span className="w-[38px] flex items-center justify-center"><svg width="13" height="13" viewBox="0 0 13 13"><path d="M.5.500h12v12H.5zM6.500.5v8M.5 8.500h12" fill="none" stroke="#666" /></svg></span>
        <span className="ml-[3px] w-[5px] h-[2px] bg-[#555]" />
        <span className="relative ml-[5px] w-[100px] h-px bg-[#aaa] flex items-center"><span className="absolute left-[29px] w-[3px] h-[14px] bg-[#666]" /><span className="absolute left-[50px] w-px h-[5px] bg-[#aaa]" /></span>
        <svg width="9" height="9" viewBox="0 0 9 9" className="ml-[5px]"><path d="M4.500 0v9M0 4.500h9" stroke="#555" strokeWidth="1.500" /></svg>
        <span className="ml-[17px]">60%</span>
      </div>

      {/* overlays */}
      <div className="absolute left-0 top-0 bottom-0 w-px bg-[#217346] z-30" />
      <div className="absolute left-[168px] top-[261px] w-[75px] h-[578px] border-2 border-[#217346] z-10 pointer-events-none">
        <span className="absolute right-[-4px] bottom-[-4px] w-[6px] h-[6px] bg-[#217346] border border-white" />
      </div>
      <svg width="40" height="40" viewBox="0 0 40 40" className="absolute left-[1045px] top-[799px] z-10">
        <circle cx="20" cy="20" r="15.500" fill="none" stroke="#f47878" strokeWidth="1" />
        <circle cx="20" cy="20" r="12.500" fill="none" stroke="#f9a8a8" strokeWidth="3" strokeDasharray="1.500 1" />
        <path d="M20 13.500l1.700 4.700h5l-4 3 1.500 4.800-4.200-2.900-4.200 2.900 1.500-4.800-4-3h5z" fill="#f01010" />
      </svg>
      <ContextMenu />
      <MiniToolbar />
      <svg width="80" height="250" viewBox="0 0 80 250" className="absolute left-[224px] top-[402px] z-30 drop-shadow-[3px_2px_2px_rgba(0,0,0,0.35)]">
        <path d="M5 5L8 4 60 214 68 209 62 240 45 219 54 216z" fill="#e0101a" />
      </svg>
      <svg width="18" height="22" viewBox="0 0 18 22" className="absolute left-[391px] top-[662px] z-30"><path d="M.5.500v16l4-4 3 7 3-1-3-7h6z" fill="#fff" stroke="#222" /></svg>
      {/* watermark */}
      <svg width="48" height="42" viewBox="0 0 48 42" className="absolute left-[1587px] top-[984px] z-30">
        <path d="M40 1C22 4 5 16 3 27c-1 6 4 9 10 7" fill="none" stroke="#58a8dd" strokeWidth="3.500" />
        <path d="M12 27c-4-8 8-14 16-13" fill="none" stroke="#4b8fcf" strokeWidth="3" />
        <path d="M24 19c10-3 15 2 13 8-2 7-14 11-24 12" fill="none" stroke="#62bb72" strokeWidth="3.500" />
        <path d="M12 39c5 0 10-1 14-3" fill="none" stroke="#e6de5a" strokeWidth="3" />
      </svg>
      <div className="absolute left-[1629px] top-[985px] z-30 text-[21px] leading-[26px] font-bold text-[#3f8fd6] whitespace-nowrap">极光下载站</div>
      <div className="absolute left-[1630px] top-[1009px] z-30 text-[16px] leading-[20px] text-[#5cb978] whitespace-nowrap">www.xz7.com</div>
    </div>
  );
}
